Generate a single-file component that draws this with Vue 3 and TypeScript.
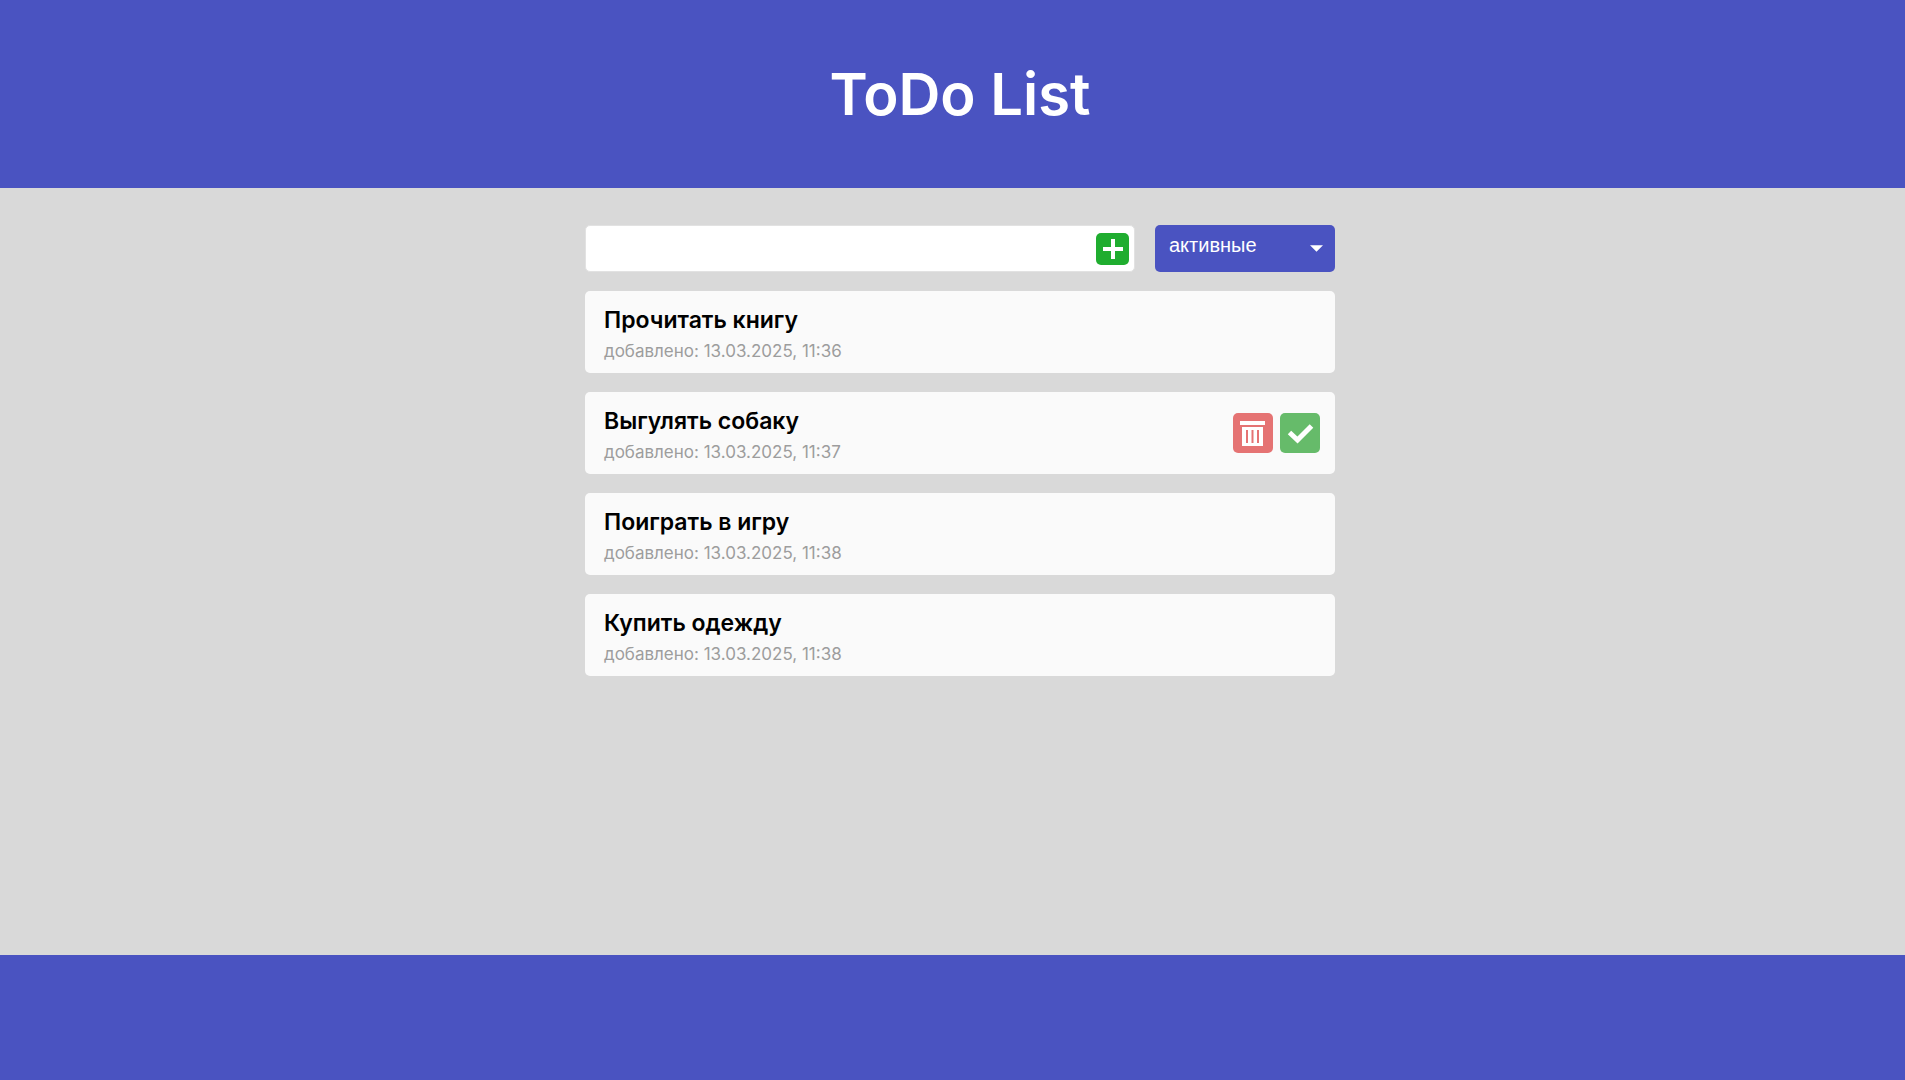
<script setup lang="ts">
import { ref, computed } from 'vue'

interface Task {
  id: number
  title: string
  added: string
  done: boolean
}

const draft = ref('')
const filter = ref<'active' | 'done'>('active')
const current = ref(2)
const tasks = ref<Task[]>([
  { id: 1, title: 'Прочитать книгу', added: '13.03.2025, 11:36', done: false },
  { id: 2, title: 'Выгулять собаку', added: '13.03.2025, 11:37', done: false },
  { id: 3, title: 'Поиграть в игру', added: '13.03.2025, 11:38', done: false },
  { id: 4, title: 'Купить одежду', added: '13.03.2025, 11:38', done: false },
])

const visible = computed(() => tasks.value.filter((t) => t.done === (filter.value === 'done')))

function addTask() {
  const title = draft.value.trim()
  if (!title) return
  const added = new Date().toLocaleString('ru-RU', { dateStyle: 'short', timeStyle: 'short' })
  tasks.value.push({ id: Date.now(), title, added, done: false })
  draft.value = ''
}

function removeTask(id: number) {
  tasks.value = tasks.value.filter((t) => t.id !== id)
}
</script>

<template>
  <div class="page">
    <header class="header">
      <h1>ToDo List</h1>
    </header>
    <main class="main">
      <div class="container">
        <form class="toolbar" @submit.prevent="addTask">
          <div class="field">
            <input v-model="draft" class="text" type="text" aria-label="Новая задача" />
            <button class="add" type="submit" aria-label="Добавить">
              <svg viewBox="0 0 33 32" aria-hidden="true">
                <path d="M15 6h4v8h8v4h-8v8h-4v-8H7v-4h8z" fill="#fff" />
              </svg>
            </button>
          </div>
          <div class="filter">
            <select v-model="filter" aria-label="Фильтр задач">
              <option value="active">активные</option>
              <option value="done">выполненные</option>
            </select>
            <svg class="arrow" viewBox="0 0 14 7" aria-hidden="true">
              <path d="M0 0h14L7 7z" fill="#fff" />
            </svg>
          </div>
        </form>
        <ul class="list">
          <li v-for="task in visible" :key="task.id" class="card" @mouseenter="current = task.id">
            <div class="info">
              <h2>{{ task.title }}</h2>
              <p>добавлено: {{ task.added }}</p>
            </div>
            <div v-if="task.id === current" class="actions">
              <button class="action remove" type="button" aria-label="Удалить" @click="removeTask(task.id)">
                <svg viewBox="0 0 40 40" aria-hidden="true">
                  <path d="M7 8h25v4H7z" fill="#fff" />
                  <path
                    fill-rule="evenodd"
                    d="M9 14h21v19H9zM13 17v13h2V17zM18.500 17v13h2V17zM24 17v13h2V17z"
                    fill="#fff"
                  />
                </svg>
              </button>
              <button class="action complete" type="button" aria-label="Выполнено" @click="task.done = true">
                <svg viewBox="0 0 40 40" aria-hidden="true">
                  <path d="M9.500 19.500l8 7.500L31.500 13" fill="none" stroke="#fff" stroke-width="5" />
                </svg>
              </button>
            </div>
          </li>
        </ul>
      </div>
    </main>
    <footer class="footer"></footer>
  </div>
</template>

<style>
body {
  margin: 0;
}
</style>

<style scoped>
.page {
  display: flex;
  flex-direction: column;
  min-height: 100vh;
  background: #d9d9d9;
  font-family: Inter, 'Noto Sans', sans-serif;
}

.header {
  display: flex;
  align-items: center;
  justify-content: center;
  box-sizing: border-box;
  min-height: 188px;
  padding-left: 15px;
  background: #4a53c1;
}

h1 {
  margin: 0;
  color: #fff;
  font-size: 58px;
  font-weight: 600;
  line-height: 72px;
}

.main {
  flex: 1;
  padding: 37px 20px 37px 35px;
}

.container {
  max-width: 750px;
  margin: 0 auto;
}

.toolbar {
  display: flex;
  gap: 20px;
  margin-bottom: 19px;
}

.field {
  display: flex;
  flex: 1;
  align-items: center;
  box-sizing: border-box;
  height: 47px;
  padding-right: 5px;
  border: 1px solid #e2e2e2;
  border-radius: 5px;
  background: #fff;
}

.text {
  flex: 1;
  min-width: 0;
  padding: 0 12px;
  border: 0;
  outline: 0;
  background: transparent;
  font-family: inherit;
  font-size: 20px;
}

button {
  display: block;
  padding: 0;
  border: 0;
  cursor: pointer;
}

button svg {
  display: block;
  width: 100%;
  height: 100%;
}

.add {
  width: 33px;
  height: 32px;
  border-radius: 5px;
  background: #1fad2f;
}

.filter {
  position: relative;
  width: 180px;
}

select {
  width: 100%;
  height: 47px;
  padding: 0 32px 8px 14px;
  border: 0;
  border-radius: 5px;
  appearance: none;
  background: #4a53c1;
  color: #fff;
  font-family: 'Liberation Sans', Arial, sans-serif;
  font-size: 20px;
}

.arrow {
  position: absolute;
  top: 20px;
  right: 12px;
  width: 13px;
  height: 7px;
  pointer-events: none;
}

.list {
  display: flex;
  flex-direction: column;
  gap: 19px;
  margin: 0;
  padding: 0;
  list-style: none;
}

.card {
  display: flex;
  align-items: center;
  justify-content: space-between;
  box-sizing: border-box;
  min-height: 82px;
  padding: 0 15px 0 19px;
  border-radius: 5px;
  background: #fafafa;
}

.info {
  padding: 12px 0 8px;
}

h2 {
  margin: 0;
  color: #000;
  font-size: 23px;
  font-weight: 600;
  line-height: 34px;
}

p {
  margin: 0;
  color: #9d9d9d;
  font-size: 17px;
  line-height: 28px;
}

.actions {
  display: flex;
  gap: 7px;
}

.action {
  width: 40px;
  height: 40px;
  border-radius: 5px;
}

.remove {
  background: #e57373;
}

.complete {
  background: #66bb6a;
}

.footer {
  min-height: 125px;
  background: #4a53c1;
}
</style>
